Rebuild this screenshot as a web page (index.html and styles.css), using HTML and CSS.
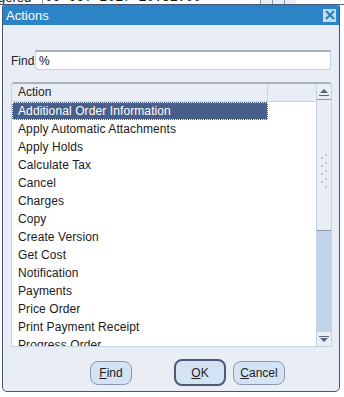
FILE: index.html
```html
<!DOCTYPE html>
<html lang="en">

<head>
    <meta charset="UTF-8">
    <title>Actions</title>
    <link rel="stylesheet" href="styles.css">
</head>

<body>
    <div class="backdrop">
        <div class="bg-row">
            <span class="bg-label">gered</span>
            <span class="bg-field">09-OCT-2017 10:31:00</span>
            <span class="bg-cells"><i></i><i></i><i></i></span>
        </div>
        <div class="bg-left">
            <span>e</span><span>S</span><span>r</span><span>l</span><span>l</span><span>:</span>
        </div>
    </div>

    <div class="dialog">
        <div class="titlebar">
            <span class="title">Actions</span>
            <span class="close">
                <svg width="12" height="12" viewBox="0 0 12 12">
                    <path d="M2 2 L10 10 M10 2 L2 10" stroke="#2c80c4" stroke-width="2.2" />
                </svg>
            </span>
        </div>

        <div class="content">
            <div class="find-row">
                <label for="findInput">Find</label>
                <input type="text" id="findInput" value="%">
            </div>

            <div class="list">
                <div class="list-main">
                    <div class="list-head">
                        <div class="col-action">Action</div>
                        <div class="col-rest"></div>
                    </div>
                    <div class="rows">
                        <div class="row selected">Additional Order Information</div>
                        <div class="row">Apply Automatic Attachments</div>
                        <div class="row">Apply Holds</div>
                        <div class="row">Calculate Tax</div>
                        <div class="row">Cancel</div>
                        <div class="row">Charges</div>
                        <div class="row">Copy</div>
                        <div class="row">Create Version</div>
                        <div class="row">Get Cost</div>
                        <div class="row">Notification</div>
                        <div class="row">Payments</div>
                        <div class="row">Price Order</div>
                        <div class="row">Print Payment Receipt</div>
                        <div class="row">Progress Order</div>
                    </div>
                </div>
                <div class="scrollbar">
                    <div class="arrow up">
                        <svg width="10" height="8" viewBox="0 0 10 8">
                            <path d="M1 5 L5 1 L9 5 Z" fill="#5c6478" />
                            <rect x="0" y="7" width="10" height="1" fill="#5c6478" />
                        </svg>
                    </div>
                    <div class="thumb">
                        <svg width="8" height="34" viewBox="0 0 8 34">
                            <g fill="#8a96ae">
                                <rect x="6" y="0" width="1" height="1" /><rect x="5" y="1" width="1" height="1" />
                                <rect x="1" y="4" width="1" height="1" /><rect x="2" y="3" width="1" height="1" />
                                <rect x="6" y="8" width="1" height="1" /><rect x="5" y="9" width="1" height="1" />
                                <rect x="1" y="12" width="1" height="1" /><rect x="2" y="11" width="1" height="1" />
                                <rect x="6" y="16" width="1" height="1" /><rect x="5" y="17" width="1" height="1" />
                                <rect x="1" y="20" width="1" height="1" /><rect x="2" y="19" width="1" height="1" />
                                <rect x="6" y="24" width="1" height="1" /><rect x="5" y="25" width="1" height="1" />
                                <rect x="1" y="28" width="1" height="1" /><rect x="2" y="27" width="1" height="1" />
                                <rect x="6" y="32" width="1" height="1" /><rect x="5" y="33" width="1" height="1" />
                            </g>
                        </svg>
                    </div>
                    <div class="track"></div>
                    <div class="arrow down">
                        <svg width="10" height="6" viewBox="0 0 10 6">
                            <rect x="0" y="0" width="10" height="1" fill="#5c6478" />
                            <path d="M1 2 L9 2 L5 6 Z" fill="#5c6478" />
                        </svg>
                    </div>
                </div>
            </div>

            <div class="buttons">
                <button class="btn btn-find"><u>F</u>ind</button>
                <button class="btn btn-ok"><u>O</u>K</button>
                <button class="btn btn-cancel"><u>C</u>ancel</button>
            </div>
        </div>
    </div>
</body>

</html>
```

FILE: styles.css
```css
* {
    margin: 0;
    padding: 0;
    box-sizing: border-box;
}

body {
    width: 344px;
    height: 397px;
    position: relative;
    overflow: hidden;
    background-color: #fff;
    font-family: "Liberation Sans", Arial, sans-serif;
    font-size: 12px;
    color: #111;
}

/* page behind the dialog */
.backdrop {
    height: 100%;
}

.bg-row {
    display: flex;
    align-items: flex-end;
    height: 5px;
    overflow: hidden;
    border-bottom: 1px solid #5a6680;
}

.bg-label {
    font-size: 13px;
    line-height: 13px;
    margin-left: -2px;
    width: 44px;
}

.bg-field {
    font-family: "Liberation Mono", monospace;
    font-size: 13px;
    line-height: 13px;
    padding-left: 2px;
    width: 218px;
    border-left: 1px solid #8a96ae;
}

.bg-cells {
    display: flex;
}

.bg-cells i {
    display: block;
    width: 12px;
    height: 5px;
    background-color: #e8edf5;
    border-left: 1px solid #8a96ae;
}

.bg-left {
    display: flex;
    flex-direction: column;
    gap: 16px;
    width: 3px;
    overflow: hidden;
    padding-top: 22px;
    font-size: 13px;
    margin-left: -4px;
}

/* the dialog window */
.dialog {
    position: absolute;
    left: 2px;
    top: 4px;
    width: 338px;
    height: 388px;
    border: 1px solid #45557a;
    border-radius: 3px 3px 5px 5px;
    background-color: #e9eef6;
    display: flex;
    flex-direction: column;
    overflow: hidden;
}

.titlebar {
    height: 20px;
    background-color: #2c83c5;
    display: flex;
    align-items: center;
    justify-content: space-between;
    padding: 0 3px 0 3px;
}

.title {
    color: #fff;
    font-size: 13px;
}

.close {
    width: 13px;
    height: 13px;
    background-color: #c4dcf2;
    display: flex;
    align-items: center;
    justify-content: center;
}

.content {
    flex: 1;
    padding: 25px 6px 0 8px;
    display: flex;
    flex-direction: column;
}

.find-row {
    display: flex;
    align-items: center;
    height: 20px;
}

.find-row label {
    width: 24px;
    font-size: 12px;
    color: #222;
    padding-top: 2px;
}

.find-row input {
    width: 296px;
    height: 20px;
    border: 1px solid #c4d2e4;
    border-top: 2px solid #a7b0bd;
    border-radius: 0 0 3px 3px;
    padding-left: 3px;
    font-family: "Liberation Sans", Arial, sans-serif;
    font-size: 12px;
    color: #111;
    outline: none;
}

.list {
    margin-top: 12px;
    width: 321px;
    height: 265px;
    background-color: #fff;
    border: 1px solid #c4d2e4;
    border-top: 2px solid #a7b0bd;
    border-radius: 4px 4px 0 0;
    display: flex;
    overflow: hidden;
}

.list-main {
    flex: 1;
    display: flex;
    flex-direction: column;
    overflow: hidden;
}

.list-head {
    display: flex;
    height: 18px;
    flex-shrink: 0;
    background-color: #e9eef6;
    border-bottom: 1px solid #c4d2e4;
}

.col-action {
    width: 256px;
    padding-left: 6px;
    line-height: 17px;
    border-right: 1px solid #c4d2e4;
    color: #222;
}

.col-rest {
    flex: 1;
}

.rows {
    overflow: hidden;
}

.row {
    width: 256px;
    height: 18px;
    line-height: 18px;
    padding-left: 6px;
    white-space: nowrap;
    letter-spacing: 0.1px;
    color: #1a1a1a;
}

.row.selected {
    background-color: #475f8a;
    color: #fff;
    outline: 1px dotted #fff;
    outline-offset: -1px;
}

.scrollbar {
    width: 15px;
    display: flex;
    flex-direction: column;
    border-left: 1px solid #c4d2e4;
    background-color: #e9eef6;
}

.arrow {
    height: 16px;
    display: flex;
    align-items: center;
    justify-content: center;
    flex-shrink: 0;
    background-color: #e9eef6;
}

.arrow.up {
    border-radius: 5px 5px 0 0;
    border-bottom: 1px solid #8a96ae;
}

.arrow.down {
    border-radius: 0 0 5px 5px;
    border-top: 1px solid #c4d2e4;
    height: 15px;
}

.thumb {
    height: 131px;
    display: flex;
    align-items: center;
    justify-content: center;
    border-bottom: 1px solid #8a96ae;
    padding-top: 12px;
}

.track {
    flex: 1;
    background-color: #c1d3e8;
}

.buttons {
    display: flex;
    align-items: center;
    margin-top: 12px;
    padding-left: 79px;
}

.btn {
    height: 24px;
    background-color: #d4e3f3;
    border: 1px solid #8d98a8;
    border-radius: 8px;
    font-family: "Liberation Sans", Arial, sans-serif;
    font-size: 12px;
    color: #222;
}

.btn-find {
    width: 42px;
}

.btn-ok {
    width: 52px;
    height: 27px;
    margin-left: 42px;
    border: 2px solid #4d5b78;
}

.btn-cancel {
    width: 52px;
    margin-left: 7px;
}
```
